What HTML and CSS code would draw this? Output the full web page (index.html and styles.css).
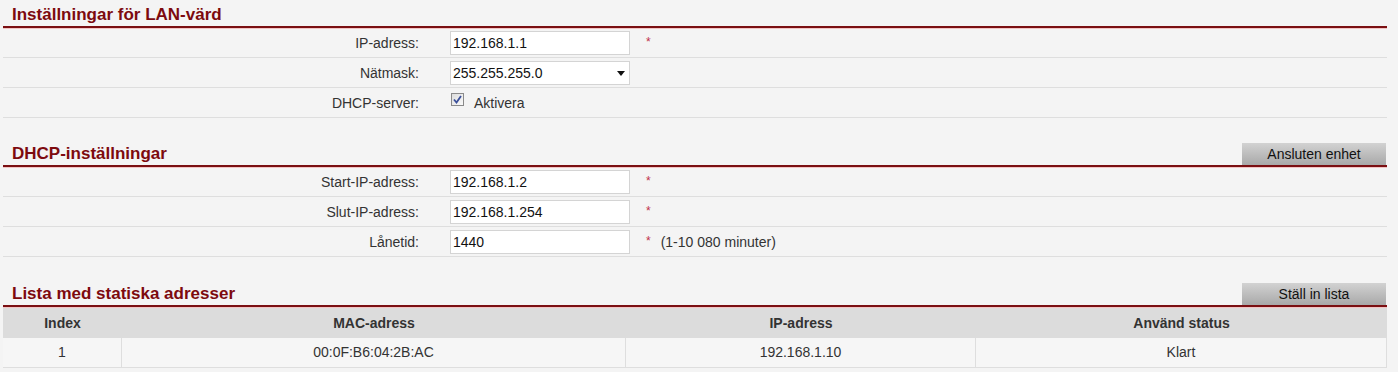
FILE: index.html
```html
<!DOCTYPE html>
<html lang="sv">
<head>
<meta charset="utf-8">
<title>LAN</title>
<link rel="stylesheet" href="styles.css">
</head>
<body>
<div class="page">
  <section class="sec">
    <div class="sec-head"><h2 class="sec-title">Inställningar för LAN-värd</h2></div>
    <div class="row">
      <div class="lbl">IP-adress:</div>
      <div class="val"><span class="field">192.168.1.1</span><span class="req">*</span></div>
    </div>
    <div class="row">
      <div class="lbl">Nätmask:</div>
      <div class="val"><span class="field select">255.255.255.0<span class="arrow"></span></span></div>
    </div>
    <div class="row">
      <div class="lbl">DHCP-server:</div>
      <div class="val"><span class="check"><svg width="9" height="9" viewBox="0 0 9 9"><path d="M1 4.5 L3.5 7.5 L8 1" fill="none" stroke="#3a4f9a" stroke-width="1.8"/></svg></span><span class="chk-lbl">Aktivera</span></div>
    </div>
  </section>

  <section class="sec gap">
    <div class="sec-head"><h2 class="sec-title">DHCP-inställningar</h2><span class="btn">Ansluten enhet</span></div>
    <div class="row">
      <div class="lbl">Start-IP-adress:</div>
      <div class="val"><span class="field">192.168.1.2</span><span class="req">*</span></div>
    </div>
    <div class="row">
      <div class="lbl">Slut-IP-adress:</div>
      <div class="val"><span class="field">192.168.1.254</span><span class="req">*</span></div>
    </div>
    <div class="row">
      <div class="lbl">Lånetid:</div>
      <div class="val"><span class="field">1440</span><span class="req">*</span><span class="note">(1-10 080 minuter)</span></div>
    </div>
  </section>

  <section class="sec gap2">
    <div class="sec-head"><h2 class="sec-title">Lista med statiska adresser</h2><span class="btn">Ställ in lista</span></div>
    <div class="tbl">
      <div class="th">Index</div>
      <div class="th">MAC-adress</div>
      <div class="th">IP-adress</div>
      <div class="th">Använd status</div>
      <div class="td">1</div>
      <div class="td">00:0F:B6:04:2B:AC</div>
      <div class="td">192.168.1.10</div>
      <div class="td">Klart</div>
    </div>
  </section>
</div>
</body>
</html>
```

FILE: styles.css
```css
html, body {
  margin: 0;
  padding: 0;
  background: #f4f4f4;
}
body {
  font-family: "Liberation Sans", Arial, sans-serif;
  font-size: 14px;
  color: #222;
}
.page {
  width: 1384px;
  padding-left: 3px;
}
.sec.gap { margin-top: 21px; }
.sec.gap2 { margin-top: 22px; }
.sec-head {
  height: 26px;
  display: flex;
  align-items: flex-end;
  justify-content: space-between;
  border-bottom: 2px solid #7a0f12;
  box-shadow: 0 1px 0 #f2c4c4;
}
.sec-title {
  margin: 0 0 2px 9px;
  font-size: 17px;
  font-weight: bold;
  color: #7d0a0e;
  line-height: 19px;
}
.btn {
  width: 144px;
  height: 22px;
  line-height: 22px;
  margin-right: 1px;
  text-align: center;
  color: #111;
  font-size: 14px;
  background: linear-gradient(to bottom, #d2d2d2 0%, #bdbdbd 50%, #a9a9a9 100%);
}
.row {
  height: 29px;
  border-bottom: 1px solid #dedede;
  display: flex;
  align-items: center;
}
.lbl {
  width: 416px;
  text-align: right;
  color: #333;
}
.val {
  margin-left: 31px;
  display: flex;
  align-items: center;
}
.field {
  box-sizing: border-box;
  width: 180px;
  height: 24px;
  line-height: 22px;
  background: #fff;
  border: 1px solid #d4d4d4;
  padding-left: 2px;
  color: #111;
  position: relative;
}
.select .arrow {
  position: absolute;
  right: 4px;
  top: 9px;
  border-left: 4px solid transparent;
  border-right: 4px solid transparent;
  border-top: 5px solid #111;
}
.req {
  color: #c0304a;
  font-size: 12px;
  margin-left: 16px;
  margin-top: -1px;
}
.note {
  margin-left: 10px;
  color: #333;
}
.check {
  box-sizing: border-box;
  width: 13px;
  height: 13px;
  margin-left: 1px;
  margin-top: -6px;
  border: 1px solid #8a8a8a;
  background: linear-gradient(to bottom right, #dcdcdc, #fafafa);
  display: flex;
  align-items: center;
  justify-content: center;
}
.chk-lbl {
  margin-left: 10px;
  color: #333;
}
.tbl {
  display: grid;
  grid-template-columns: 119px 504px 350px 411px;
  margin-top: 1px;
}
.th {
  height: 30px;
  line-height: 30px;
  background: #dcdcdc;
  text-align: center;
  font-weight: bold;
  color: #333;
}
.td {
  height: 29px;
  line-height: 29px;
  text-align: center;
  color: #333;
  background: #f6f6f6;
  border-bottom: 1px solid #dedede;
  border-right: 1px solid #dedede;
}
```
